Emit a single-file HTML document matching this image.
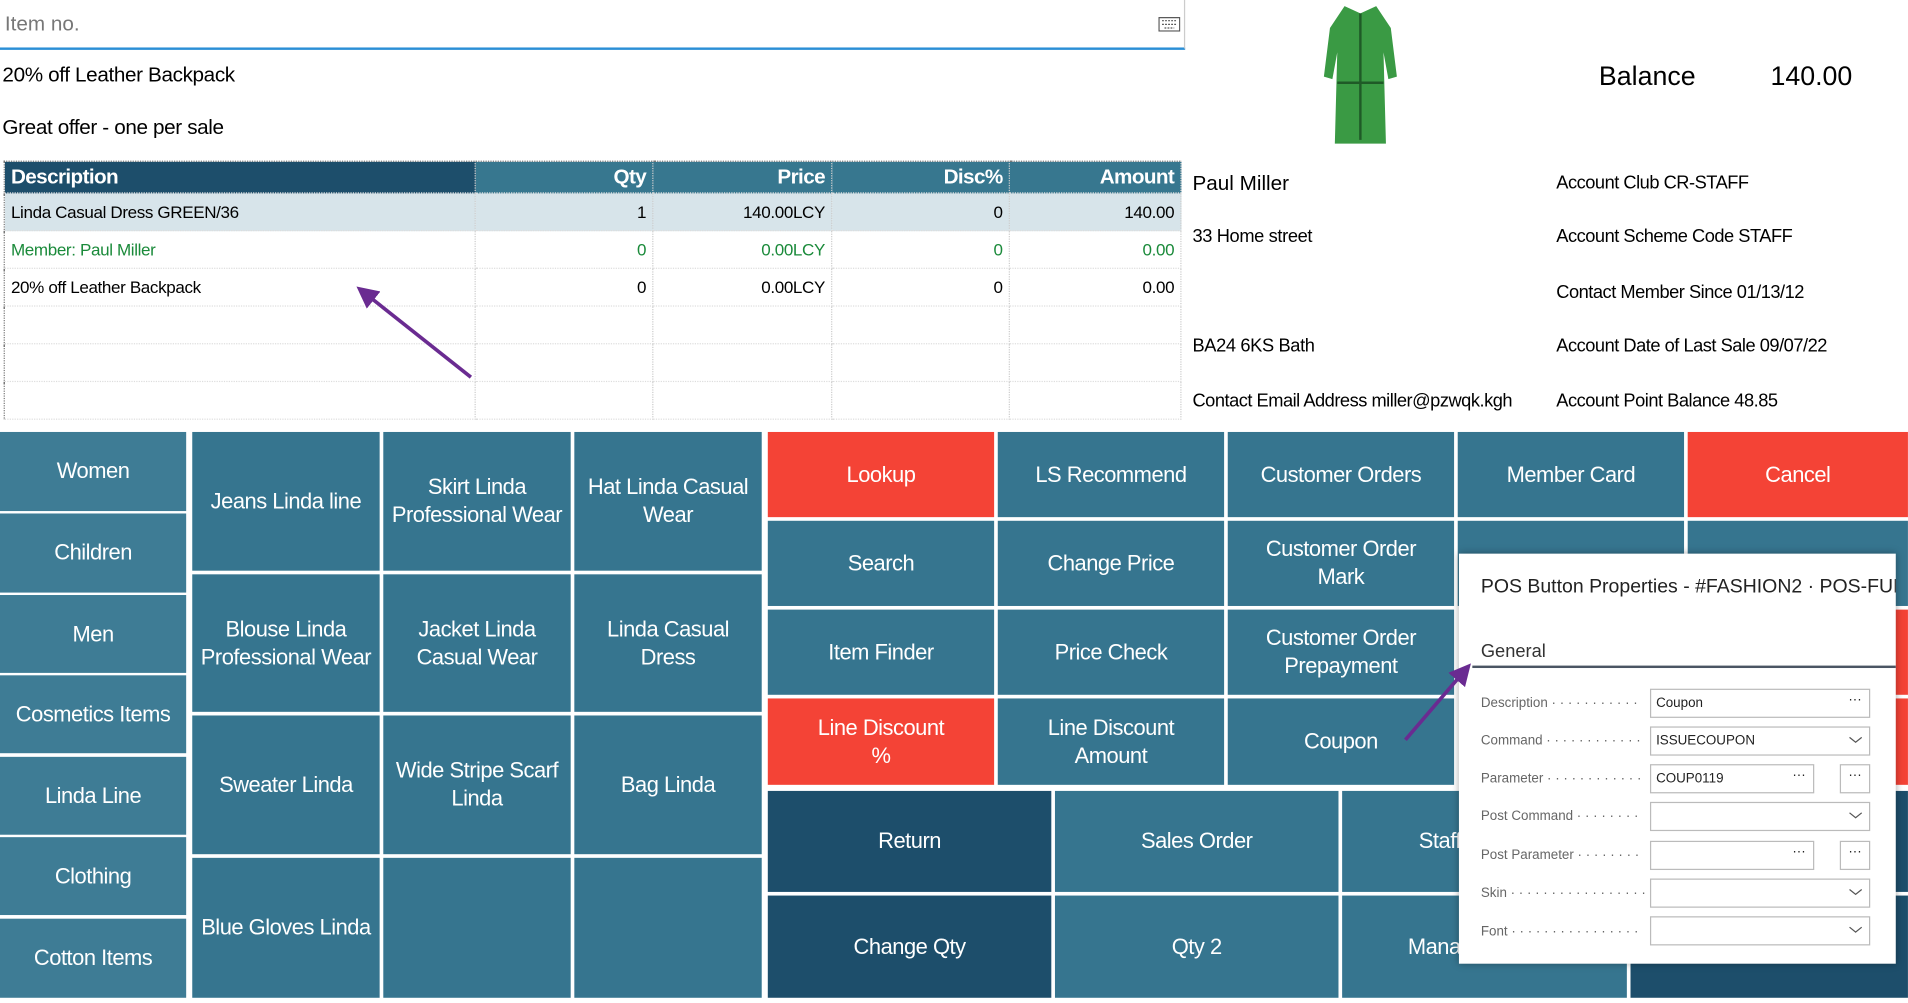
<!DOCTYPE html>
<html><head><meta charset="utf-8"><style>
html,body{margin:0;padding:0;width:1908px;height:1002px;overflow:hidden;background:#fff}
#w{position:absolute;left:0;top:0;width:1568px;height:824px;transform:scale(1.2168);transform-origin:0 0;font-family:"Liberation Sans","DejaVu Sans",sans-serif;}
.a{position:absolute}
.b{position:absolute;display:flex;align-items:center;justify-content:center;text-align:center;color:#fff;font-size:18px;line-height:23px;background:#36758f;white-space:nowrap;letter-spacing:-0.4px;overflow:hidden}
.c{background:#3e7c95}
.d{background:#1d4e6b}
.r{background:#f44336}
.t{position:absolute;white-space:nowrap}
table{border-collapse:collapse;position:absolute;left:3px;top:132px;width:968px;font-size:14px;border:1px dotted #777;letter-spacing:-0.3px}
td,th{border-right:1px dotted #ccc;border-bottom:1px dotted #ddd;padding:0 5px;height:30px;text-align:right;white-space:nowrap}
th{color:#fff;background:#37778f;font-size:17px;height:25px;letter-spacing:-0.5px}
.g td{color:#1a8a3a}
.lbl{position:absolute;left:1217px;font-size:11px;color:#666;white-space:nowrap}
.inp{position:absolute;left:1356px;width:181px;height:24px;border:1px solid #bbb;font-size:11px;line-height:22px;padding-left:4px;box-sizing:border-box;color:#222}
</style></head><body><div id="w">
<div class="a" style="left:0;top:0;width:973px;height:39px;border-bottom:2px solid #2b8fd6;border-right:1px solid #ccc"></div>
<div class="t" style="left:4px;top:10px;font-size:17px;color:#777">Item no.</div>
<svg class="a" style="left:952px;top:14px" width="18" height="12"><rect x="0.5" y="0.5" width="17" height="11" fill="none" stroke="#555"/><path d="M3 3h12M3 6h12M5 9h8" stroke="#555" stroke-dasharray="1.5 1"/></svg>
<div class="t" style="left:2px;top:52px;font-size:17px;letter-spacing:-0.3px">20% off Leather Backpack</div>
<div class="t" style="left:2px;top:95px;font-size:17px;letter-spacing:-0.3px">Great offer - one per sale</div>
<table>
<tr><th style="text-align:left;background:#1d4e6b;width:376px">Description</th><th style="width:135px">Qty</th><th style="width:136px">Price</th><th style="width:135px">Disc%</th><th>Amount</th></tr>
<tr style="background:#d7e4ea"><td style="text-align:left">Linda Casual Dress GREEN/36</td><td>1</td><td>140.00LCY</td><td>0</td><td>140.00</td></tr>
<tr class="g"><td style="text-align:left">Member: Paul Miller</td><td>0</td><td>0.00LCY</td><td>0</td><td>0.00</td></tr>
<tr><td style="text-align:left">20% off Leather Backpack</td><td>0</td><td>0.00LCY</td><td>0</td><td>0.00</td></tr>
<tr><td></td><td></td><td></td><td></td><td></td></tr>
<tr><td></td><td></td><td></td><td></td><td></td></tr>
<tr><td></td><td></td><td></td><td></td><td></td></tr>
</table>
<svg class="a" style="left:0;top:0" width="1568" height="820"><defs><marker id="m" markerWidth="6" markerHeight="6" refX="3" refY="3" orient="auto"><path d="M0 0L6 3L0 6z" fill="#6a2b91"/></marker></defs>
<line x1="387" y1="310" x2="300" y2="241" stroke="#6a2b91" stroke-width="3" marker-end="url(#m)"/>
</svg>
<svg class="a" style="left:1085px;top:3px" width="66" height="118"><path d="M20 2L33 8L46 2L58 20L63 60L56 62L52 40L54 115L12 115L14 40L10 62L3 60L8 20Z" fill="#3a9a44"/><path d="M33 8V112M14 65H52" stroke="#1f5a27" stroke-width="2"/></svg>
<div class="t" style="left:1314px;top:50px;font-size:22px">Balance</div>
<div class="t" style="left:1455px;top:50px;font-size:22px">140.00</div>
<div class="t" style="left:980px;top:141px;font-size:17px">Paul Miller</div>
<div class="t" style="left:980px;top:186px;font-size:15px;letter-spacing:-0.3px">33 Home street</div>
<div class="t" style="left:980px;top:276px;font-size:15px;letter-spacing:-0.3px">BA24 6KS Bath</div>
<div class="t" style="left:980px;top:321px;font-size:15px;letter-spacing:-0.4px">Contact Email Address miller@pzwqk.kgh</div>
<div class="t" style="left:1279px;top:142px;font-size:15px;letter-spacing:-0.4px">Account Club CR-STAFF</div>
<div class="t" style="left:1279px;top:186px;font-size:15px;letter-spacing:-0.4px">Account Scheme Code STAFF</div>
<div class="t" style="left:1279px;top:232px;font-size:15px;letter-spacing:-0.4px">Contact Member Since 01/13/12</div>
<div class="t" style="left:1279px;top:276px;font-size:15px;letter-spacing:-0.4px">Account Date of Last Sale 09/07/22</div>
<div class="t" style="left:1279px;top:321px;font-size:15px;letter-spacing:-0.4px">Account Point Balance 48.85</div>

<div class="b c" style="left:0;top:355px;width:153px;height:65px">Women</div>
<div class="b c" style="left:0;top:422px;width:153px;height:65px">Children</div>
<div class="b c" style="left:0;top:489px;width:153px;height:64px">Men</div>
<div class="b c" style="left:0;top:555px;width:153px;height:64px">Cosmetics Items</div>
<div class="b c" style="left:0;top:622px;width:153px;height:64px">Linda Line</div>
<div class="b c" style="left:0;top:688px;width:153px;height:64px">Clothing</div>
<div class="b c" style="left:0;top:755px;width:153px;height:65px">Cotton Items</div>

<div class="b" style="left:158px;top:355px;width:154px;height:114px">Jeans Linda line</div>
<div class="b" style="left:315px;top:355px;width:154px;height:114px">Skirt Linda<br>Professional Wear</div>
<div class="b" style="left:472px;top:355px;width:154px;height:114px">Hat Linda Casual<br>Wear</div>
<div class="b" style="left:158px;top:472px;width:154px;height:113px">Blouse Linda<br>Professional Wear</div>
<div class="b" style="left:315px;top:472px;width:154px;height:113px">Jacket Linda<br>Casual Wear</div>
<div class="b" style="left:472px;top:472px;width:154px;height:113px">Linda Casual<br>Dress</div>
<div class="b" style="left:158px;top:588px;width:154px;height:114px">Sweater Linda</div>
<div class="b" style="left:315px;top:588px;width:154px;height:114px">Wide Stripe Scarf<br>Linda</div>
<div class="b" style="left:472px;top:588px;width:154px;height:114px">Bag Linda</div>
<div class="b" style="left:158px;top:705px;width:154px;height:115px">Blue Gloves Linda</div>
<div class="b" style="left:315px;top:705px;width:154px;height:115px"></div>
<div class="b" style="left:472px;top:705px;width:154px;height:115px"></div>

<div class="b r" style="left:631px;top:355px;width:186px;height:70px">Lookup</div>
<div class="b" style="left:820px;top:355px;width:186px;height:70px">LS Recommend</div>
<div class="b" style="left:1009px;top:355px;width:186px;height:70px">Customer Orders</div>
<div class="b" style="left:1198px;top:355px;width:186px;height:70px">Member Card</div>
<div class="b r" style="left:1387px;top:355px;width:181px;height:70px">Cancel</div>
<div class="b" style="left:631px;top:428px;width:186px;height:70px">Search</div>
<div class="b" style="left:820px;top:428px;width:186px;height:70px">Change Price</div>
<div class="b" style="left:1009px;top:428px;width:186px;height:70px">Customer Order<br>Mark</div>
<div class="b" style="left:1198px;top:428px;width:186px;height:70px"></div>
<div class="b" style="left:1387px;top:428px;width:181px;height:70px"></div>
<div class="b" style="left:631px;top:501px;width:186px;height:70px">Item Finder</div>
<div class="b" style="left:820px;top:501px;width:186px;height:70px">Price Check</div>
<div class="b" style="left:1009px;top:501px;width:186px;height:70px">Customer Order<br>Prepayment</div>
<div class="b r" style="left:1387px;top:501px;width:181px;height:70px"></div>
<div class="b r" style="left:631px;top:574px;width:186px;height:71px">Line Discount<br>%</div>
<div class="b" style="left:820px;top:574px;width:186px;height:71px">Line Discount<br>Amount</div>
<div class="b" style="left:1009px;top:574px;width:186px;height:71px">Coupon</div>
<div class="b r" style="left:1387px;top:574px;width:181px;height:71px"></div>

<div class="b d" style="left:631px;top:650px;width:233px;height:83px">Return</div>
<div class="b" style="left:867px;top:650px;width:233px;height:83px">Sales Order</div>
<div class="b" style="left:1103px;top:650px;width:234px;height:83px;justify-content:flex-start;padding-left:63px;box-sizing:border-box">Staff</div>
<div class="b d" style="left:1340px;top:650px;width:228px;height:83px"></div>
<div class="b d" style="left:631px;top:736px;width:233px;height:84px">Change Qty</div>
<div class="b" style="left:867px;top:736px;width:233px;height:84px">Qty 2</div>
<div class="b" style="left:1103px;top:736px;width:234px;height:84px;justify-content:flex-start;padding-left:54px;box-sizing:border-box">Manager</div>
<div class="b d" style="left:1340px;top:736px;width:228px;height:84px"></div>

<div class="a" style="left:1199px;top:455px;width:359px;height:337px;background:#fff;box-shadow:0 0 6px rgba(0,0,0,.35);overflow:hidden">
<div class="t" style="left:18px;top:19px;font-size:16px;color:#222">POS Button Properties - #FASHION2 · POS-FUNCTIONS</div>
<div class="t" style="left:18px;top:72px;font-size:15px;color:#333">General</div>
<div class="a" style="left:11px;top:92px;width:360px;height:2px;background:#4a5563"></div>
</div>
<div class="lbl" style="top:572px">Description · · · · · · · · · · ·</div>
<div class="lbl" style="top:603px">Command · · · · · · · · · · · ·</div>
<div class="lbl" style="top:634px">Parameter · · · · · · · · · · · ·</div>
<div class="lbl" style="top:665px">Post Command · · · · · · · ·</div>
<div class="lbl" style="top:697px">Post Parameter · · · · · · · ·</div>
<div class="lbl" style="top:728px">Skin · · · · · · · · · · · · · · · · ·</div>
<div class="lbl" style="top:760px">Font · · · · · · · · · · · · · · · ·</div>
<div class="inp" style="top:566px">Coupon<span style="position:absolute;right:6px;top:-3px">···</span></div>
<div class="inp" style="top:597px">ISSUECOUPON</div>
<div class="inp" style="top:628px;width:135px">COUP0119<span style="position:absolute;right:6px;top:-3px">···</span></div>
<div class="inp" style="top:628px;left:1512px;width:25px;text-align:center;padding:0;line-height:16px">···</div>
<div class="inp" style="top:659px"></div>
<div class="inp" style="top:691px;width:135px"><span style="position:absolute;right:6px;top:-3px">···</span></div>
<div class="inp" style="top:691px;left:1512px;width:25px;text-align:center;padding:0;line-height:16px">···</div>
<div class="inp" style="top:722px"></div>
<div class="inp" style="top:753px"></div>
<svg class="a" style="left:0;top:0" width="1568" height="820">
<g fill="none" stroke="#555" stroke-width="1"><path d="M1520 606l5 4 5-4M1520 668l5 4 5-4M1520 731l5 4 5-4M1520 762l5 4 5-4"/></g>
<line x1="1155" y1="608" x2="1203" y2="552" stroke="#6a2b91" stroke-width="3" marker-end="url(#m)"/>
</svg>
</div></body></html>
